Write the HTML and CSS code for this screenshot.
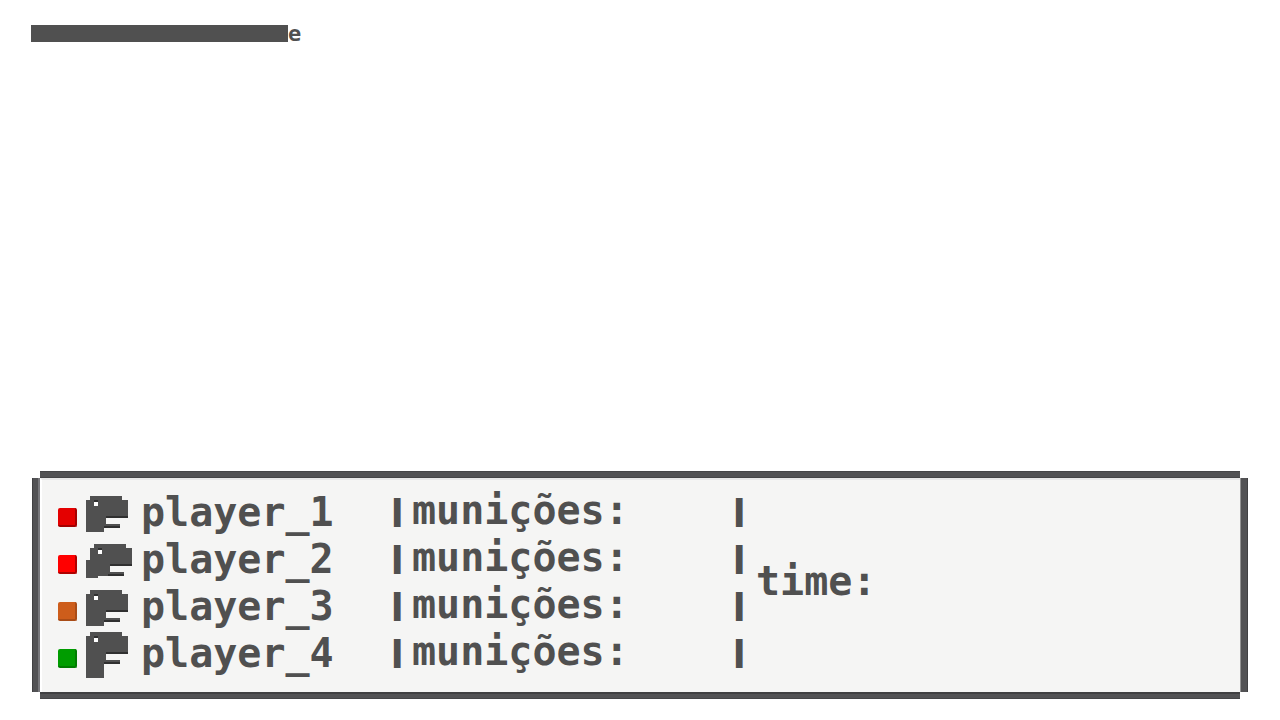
FILE: index.html
```html
<!DOCTYPE html>
<html lang="pt">
<head>
<meta charset="utf-8">
<meta name="viewport" content="width=device-width, initial-scale=1">
<title>Players</title>
<link rel="stylesheet" href="styles.css">
</head>
<body>
<header class="heading"><span class="heading-bar"></span><span class="heading-end">e</span></header>
<main class="panel">
  <div class="edge edge-top"></div>
  <div class="edge edge-left"></div>
  <div class="content">
    <ul class="players">
      <li class="player">
        <span class="status red"></span>
        <svg class="head" width="42" height="36" viewBox="0 0 42 36" shape-rendering="crispEdges" aria-hidden="true"><path class="skin" d="M4 0H36V4H42V20H20V28H34V32H18V36H0V4H4z"/><path class="shade" d="M20 20h22v2H20zM18 30h16v2H18zM8 4h4v2H8z"/><path class="eye" d="M8 6h4v4H8z"/></svg>
        <span class="name">player_1</span><span class="pipe">|</span><span class="ammo">munições:</span><span class="pipe">|</span>
      </li>
      <li class="player">
        <span class="status bright"></span>
        <svg class="head" width="46" height="34" viewBox="0 0 46 34" shape-rendering="crispEdges" aria-hidden="true"><path class="skin" d="M8 0H40V4H46V20H24V28H38V32H12V34H0V16H4V4H8z"/><path class="shade" d="M24 20h22v2H24zM22 30h16v2H22zM12 4h4v2h-4z"/><path class="eye" d="M12 6h4v4h-4z"/></svg>
        <span class="name">player_2</span><span class="pipe">|</span><span class="ammo">munições:</span><span class="pipe">|</span>
      </li>
      <li class="player">
        <span class="status orange"></span>
        <svg class="head" width="42" height="36" viewBox="0 0 42 36" shape-rendering="crispEdges" aria-hidden="true"><path class="skin" d="M4 0H36V4H42V20H20V28H34V32H18V36H0V4H4z"/><path class="shade" d="M20 20h22v2H20zM18 30h16v2H18zM8 4h4v2H8z"/><path class="eye" d="M8 6h4v4H8z"/></svg>
        <span class="name">player_3</span><span class="pipe">|</span><span class="ammo">munições:</span><span class="pipe">|</span>
      </li>
      <li class="player">
        <span class="status green"></span>
        <svg class="head" width="42" height="46" viewBox="0 0 42 46" shape-rendering="crispEdges" aria-hidden="true"><path class="skin" d="M4 0H36V4H42V20H20V28H34V32H18V46H0V4H4z"/><path class="shade" d="M20 20h22v2H20zM18 30h16v2H18zM8 4h4v2H8z"/><path class="eye" d="M8 6h4v4H8z"/></svg>
        <span class="name">player_4</span><span class="pipe">|</span><span class="ammo">munições:</span><span class="pipe">|</span>
      </li>
    </ul>
    <div class="time">time:</div>
  </div>
  <div class="edge edge-right"></div>
  <div class="edge edge-bottom"></div>
</main>
</body>
</html>
```
FILE: styles.css
```css
* { box-sizing: border-box; }
body {
  margin: 0;
  min-height: 100vh;
  padding: 25px 32px 21px 31px;
  display: flex;
  flex-direction: column;
  justify-content: space-between;
  background: #fff;
  color: #505050;
  font-family: "DejaVu Sans Mono", monospace;
  font-weight: bold;
}
.heading { display: flex; }
.heading-bar {
  width: 257px;
  height: 17px;
  background: #505050;
}
.heading-end {
  font-size: 22px;
  line-height: 17px;
}
.panel {
  margin-left: 1px;
  display: grid;
  grid-template-columns: 8px 1fr 8px;
  grid-template-rows: 7px auto 7px;
  grid-template-areas:
    ". top ."
    "left content right"
    ". bottom .";
}
.edge { background: #525254; }
.edge-top { grid-area: top; border-top: 1px solid #454547; border-bottom: 1px solid #454547; }
.edge-bottom { grid-area: bottom; border-top: 2px solid #404042; border-bottom: 1px solid #454547; }
.edge-left { grid-area: left; border-left: 1px solid #404042; border-right: 2px solid #77777b; }
.edge-right { grid-area: right; border-left: 1px solid #929292; border-right: 1px solid #404042; }
.content {
  grid-area: content;
  min-width: 0;
  padding: 10px 16px 14px;
  border-top: 2px solid #e8e8e8;
  border-left: 2px solid #fff;
  background: #f5f5f4;
  display: flex;
  align-items: center;
  font-size: 40px;
  line-height: 47px;
}
.players {
  margin: 0;
  padding: 0;
  list-style: none;
}
.player {
  display: grid;
  grid-template-columns: 28px 55px 249px 22px 320px 22px;
  grid-template-rows: 47px;
  align-items: center;
}
.status {
  width: 19px;
  height: 19px;
  margin-top: 8px;
  border-radius: 2px;
  border-right: 2px solid;
  border-bottom: 2px solid;
}
.red { background: #e40000; border-color: #a40000; }
.bright { background: #f00; border-color: #b00000; }
.orange { background: #cd5d1b; border-color: #a94c17; }
.green { background: #009c00; border-color: #007c00; }
.head { display: block; }
.skin { fill: #505050; }
.shade { fill: #303030; }
.eye { fill: #fff; }
.name { padding-bottom: 2px; }
.ammo { padding-bottom: 6px; }
.pipe {
  font-size: 24px;
  line-height: 24px;
  padding-bottom: 6px;
  -webkit-text-stroke: 4px #505050;
}
.time { margin-left: 2px; padding-bottom: 6px; }
```
